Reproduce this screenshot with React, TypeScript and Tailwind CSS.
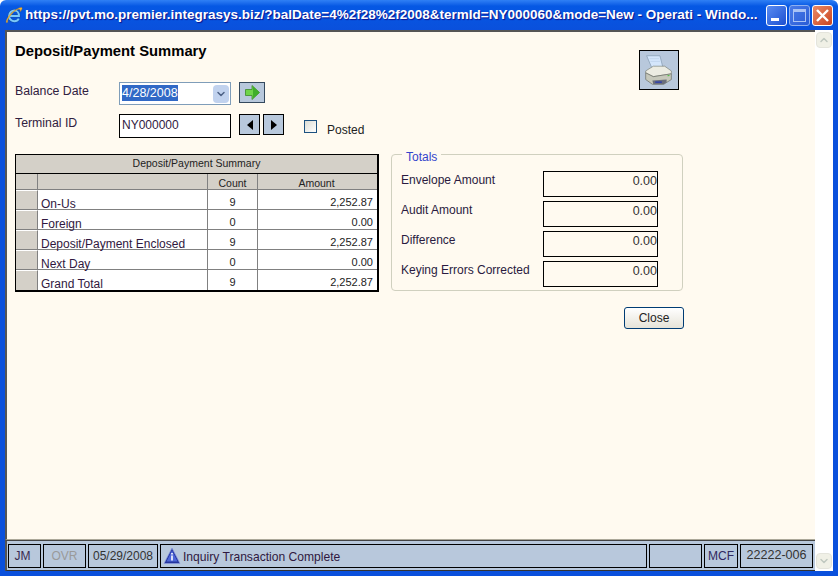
import { ChevronDown, ChevronUp } from "lucide-react";

const rows = [
  { label: "On-Us", count: "9", amount: "2,252.87" },
  { label: "Foreign", count: "0", amount: "0.00" },
  { label: "Deposit/Payment Enclosed", count: "9", amount: "2,252.87" },
  { label: "Next Day", count: "0", amount: "0.00" },
  { label: "Grand Total", count: "9", amount: "2,252.87" },
];

const totals = ["Envelope Amount", "Audit Amount", "Difference", "Keying Errors Corrected"];

function IeLogo() {
  return (
    <svg viewBox="0 0 20 20" className="w-[18px] h-[18px] shrink-0">
      <path d="M5.5 11H15.5C15.5 7.5 13.5 5 10.5 5C7.5 5 4.5 7.5 4.5 11C4.5 14.5 7.5 17 10.5 17C12.8 17 14.3 16 15.3 14" fill="none" stroke="#0f4fae" strokeWidth="3.4" />
      <path d="M5.5 11H15.5C15.5 7.5 13.5 5 10.5 5C7.5 5 4.5 7.5 4.5 11C4.5 14.5 7.5 17 10.5 17C12.8 17 14.3 16 15.3 14" fill="none" stroke="#7cc8f8" strokeWidth="2.2" />
      <path d="M1.5 18.5C.5 16 4 10 9 6c4-3 9-5.5 10-4 .5 1-.8 3-2 4.5 .2-1.8-.2-3-1.5-3C12 3.5 4.5 11 3 16c-.3 1 0 1.5.6 1.8z" fill="#f2b632" stroke="#b5761a" strokeWidth=".3" />
    </svg>
  );
}

function Printer() {
  return (
    <svg viewBox="0 0 40 40" className="w-full h-full">
      <path d="M7 5h14l3 12-11 2z" fill="#d4e6fb" stroke="#8097ae" strokeWidth=".7" />
      <path d="M10 8h10M11 11h10" stroke="#b4cbe6" strokeWidth=".6" />
      <path d="M6 21l8-5h12l7 5v3l-19 3-8-4z" fill="#ecece2" stroke="#7c8076" strokeWidth=".7" />
      <path d="M6 23l8 4 19-3v6l-8 5H13l-7-5z" fill="#c6c8bb" stroke="#666a60" strokeWidth=".7" />
      <path d="M13 31l15-1v3l-3 2H14z" fill="#6a6f7c" />
      <path d="M16 32h7v1.5h-7z" fill="#2b3cae" />
      <path d="M29 25.5l2-.3v1.2l-2 .3z" fill="#44c23a" />
    </svg>
  );
}

function InfoTriangle() {
  return (
    <svg viewBox="0 0 18 18" className="w-[18px] h-[18px] shrink-0">
      <path d="M9 1l8 15.5H1z" fill="#24349e" stroke="#8a9ae0" strokeWidth=".7" />
      <path d="M9 3.5l5.5 11h-11z" fill="#4d66d8" />
      <path d="M8.2 6h1.6v1.6H8.2zM8.2 8.5h1.6v5H8.2z" fill="#ffffff" />
    </svg>
  );
}

function StatusCell({ className, children }: { className: string; children?: React.ReactNode }) {
  return <div className={`h-6 border border-black flex items-center ${className}`}>{children}</div>;
}

export default function App() {
  return (
    <div className="w-[838px] h-[576px] overflow-hidden flex flex-col bg-white font-['Liberation_Sans',Arial,sans-serif] text-xs text-[#222]">
      {/* title bar */}
      <div className="h-[30px] shrink-0 flex items-center pl-[5px] pr-[5px] rounded-t-md bg-gradient-to-b from-[#2f80f5] via-[#0558e4] via-20% to-[#0a50dc]">
        <IeLogo />
        <span className="ml-[2px] text-[13.5px] font-bold text-white whitespace-nowrap [text-shadow:1px_1px_1px_#0f1089]">
          https://pvt.mo.premier.integrasys.biz/?balDate=4%2f28%2f2008&amp;termId=NY000060&amp;mode=New - Operati - Windo...
        </span>
        <div className="ml-auto flex gap-[2px]">
          <div className="w-[21px] h-[21px] rounded-[3px] border border-white bg-gradient-to-br from-[#5a8cf2] to-[#1d4fd0] flex items-end pl-1 pb-1">
            <div className="w-[8px] h-[3px] bg-white" />
          </div>
          <div className="w-[21px] h-[21px] rounded-[3px] border border-[#8fb0f0] bg-gradient-to-br from-[#4a7be8] to-[#2a5cd6] flex items-center justify-center">
            <div className="w-[13px] h-[13px] border border-[#a9c2f5] border-t-[3px]" />
          </div>
          <div className="w-[21px] h-[21px] rounded-[3px] border border-white bg-gradient-to-br from-[#ea8a66] to-[#c9421c] flex items-center justify-center">
            <svg viewBox="0 0 13 13" className="w-[13px] h-[13px]">
              <path d="M1 1l11 11M12 1L1 12" stroke="#fff" strokeWidth="2.4" />
            </svg>
          </div>
        </div>
      </div>

      {/* window body */}
      <div className="flex-1 min-h-0 bg-[#0a50dc] px-[5px] pb-[5px] flex">
        <div className="flex-1 min-w-0 flex flex-col">
          <div className="flex-1 min-h-0 border-t-2 border-l-2 border-[#555] border-b border-b-[#aca899] bg-[#fffaf0] pl-2 pt-[11px] relative">
            <div className="text-[14.8px] font-bold text-black leading-4">Deposit/Payment Summary</div>

            <div className="flex mt-[23px] h-[23px]">
              <div className="w-[104px] pt-[1px] text-[12.3px] text-[#302040]">Balance Date</div>
              <div className="w-[112px] h-[23px] border border-[#7f9db9] bg-white flex items-center pl-[2px] pr-[1px]">
                <span className="bg-[#3169c6] text-white text-[12.5px] leading-4 mb-[2px]">4/28/2008</span>
                <div className="ml-auto w-[16px] h-[18px] rounded-sm bg-[#c1d2ee] flex items-center justify-center">
                  <ChevronDown size={12} strokeWidth={3} color="#4d6185" />
                </div>
              </div>
              <button className="ml-2 w-[26px] h-[21px] border border-[#34495e] bg-[#b8c8dc] flex items-center justify-center">
                <svg viewBox="0 0 15 15" className="w-[15px] h-[15px]">
                  <path d="M.5 4.5H7V.5l7.5 7-7.5 7v-4H.5z" fill="#6fd44a" stroke="#3c8a28" strokeWidth=".8" />
                  <path d="M8 1.5l6.5 6-6.5 6z" fill="#3fae2a" />
                </svg>
              </button>
            </div>

            <div className="flex mt-[9px] h-[24px]">
              <div className="w-[104px] pt-[1px] text-[12.3px] text-[#302040]">Terminal ID</div>
              <div className="w-[112px] h-[24px] border border-black bg-white flex items-center pl-[2px] pb-[2px] text-[#302040]">NY000000</div>
              <button className="ml-2 w-[21px] h-[21px] border border-black bg-[#b8c8dc] flex items-center justify-center">
                <div className="w-0 h-0 border-y-[5px] border-y-transparent border-r-[6px] border-r-black" />
              </button>
              <button className="ml-[3px] w-[21px] h-[21px] border border-black bg-[#b8c8dc] flex items-center justify-center">
                <div className="w-0 h-0 border-y-[5px] border-y-transparent border-l-[6px] border-l-black" />
              </button>
              <div className="ml-5 mt-[6px] w-[13px] h-[13px] border border-[#1c5180] bg-gradient-to-br from-[#dcdcd4] to-white" />
              <div className="ml-[10px] mt-[8px] text-[#222]">Posted</div>
            </div>

            <div className="flex mt-[16px]">
              {/* summary grid */}
              <div className="w-[364px] h-[138px] border border-black border-b-2 border-r-2 bg-white text-[11px] flex flex-col">
                <div className="h-[20px] bg-[#d4d0c8] border-b border-black flex items-center justify-center pb-[3px] text-[10.5px]">Deposit/Payment Summary</div>
                <div className="h-[16px] flex bg-[#d4d0c8] text-[10.5px] border-b border-[#808080]">
                  <div className="w-[22px] border-r border-[#808080]" />
                  <div className="w-[170px] border-r border-[#808080]" />
                  <div className="w-[50px] border-r border-[#808080] text-center leading-[18px]">Count</div>
                  <div className="flex-1 text-center leading-[18px] pr-[2px]">Amount</div>
                </div>
                {rows.map((r) => (
                  <div key={r.label} className="h-5 flex border-b border-[#808080] last:border-b-0">
                    <div className="w-[22px] bg-[#d4d0c8] border-r border-[#808080] border-t border-t-white" />
                    <div className="w-[170px] border-r border-[#808080] pl-[3px] pt-[7px] text-[12px] leading-[15px] text-[#301840] whitespace-nowrap">{r.label}</div>
                    <div className="w-[50px] border-r border-[#808080] text-center pt-[5px] leading-[14px]">{r.count}</div>
                    <div className="flex-1 text-right pr-[4px] pt-[5px] leading-[14px]">{r.amount}</div>
                  </div>
                ))}
              </div>

              {/* totals */}
              <div className="ml-3 w-[292px]">
                <div className="relative h-[137px] border border-[#d0d0bf] rounded pl-[9px] pr-[24px] pt-4">
                  <div className="absolute left-[10px] -top-[4px] px-1 bg-[#fffaf0] text-[#3344cc] leading-[13px]">Totals</div>
                  <div className="flex flex-col gap-1">
                    {totals.map((t) => (
                      <div key={t} className="flex h-[26px] justify-between">
                        <div className="text-[#2a1a40] leading-[19px]">{t}</div>
                        <div className="w-[115px] border border-black text-right pt-[2px] text-[12.5px] text-[#333] leading-[15px]">0.00</div>
                      </div>
                    ))}
                  </div>
                </div>
                <div className="flex justify-end mt-[16px] -mr-px">
                  <button className="w-[60px] h-[22px] rounded-[3px] border border-[#003c74] bg-gradient-to-b from-white to-[#e6e3d8] text-[#222]">Close</button>
                </div>
              </div>
            </div>

            {/* print button floats over the form */}
            <button className="absolute left-[632px] top-[18px] w-10 h-10 border border-black bg-[#b8c8dc]">
              <Printer />
            </button>
          </div>

          {/* status bar */}
          <div className="h-[31px] shrink-0 border-t border-[#444] border-l-2 border-l-[#555] border-b border-b-[#333] bg-[#b8c8dc] flex items-center gap-[2px] pl-px text-[12px]">
            <StatusCell className="w-[33px] justify-center pr-1 text-[#3a2a50]">JM</StatusCell>
            <StatusCell className="w-[43px] justify-center text-[#9a9a9a]">OVR</StatusCell>
            <StatusCell className="w-[70px] justify-center text-[#333]">05/29/2008</StatusCell>
            <StatusCell className="w-[487px] pl-[2px] gap-[2px] text-[12.1px] text-[#301840]">
              <InfoTriangle />
              <span className="pt-[4px]">Inquiry Transaction Complete</span>
            </StatusCell>
            <StatusCell className="w-[53px]" />
            <StatusCell className="w-[34px] justify-center text-[#302860]">MCF</StatusCell>
            <StatusCell className="w-[73px] justify-center text-[12.6px] text-[#333]">22222-006</StatusCell>
          </div>
        </div>

        {/* scrollbar */}
        <div className="w-[18px] shrink-0 bg-white flex flex-col justify-between pt-[2px] pb-[2px]">
          <div className="h-[16px] w-[16px] mx-auto rounded-sm border border-[#e4e4dc] bg-[#f0f0e6] flex items-center justify-center">
            <ChevronUp size={12} strokeWidth={3} color="#c0c8c0" />
          </div>
          <div className="h-[16px] w-[16px] mx-auto rounded-sm border border-[#e4e4dc] bg-[#f0f0e6] flex items-center justify-center">
            <ChevronDown size={12} strokeWidth={3} color="#c0c8c0" />
          </div>
        </div>
      </div>
    </div>
  );
}
